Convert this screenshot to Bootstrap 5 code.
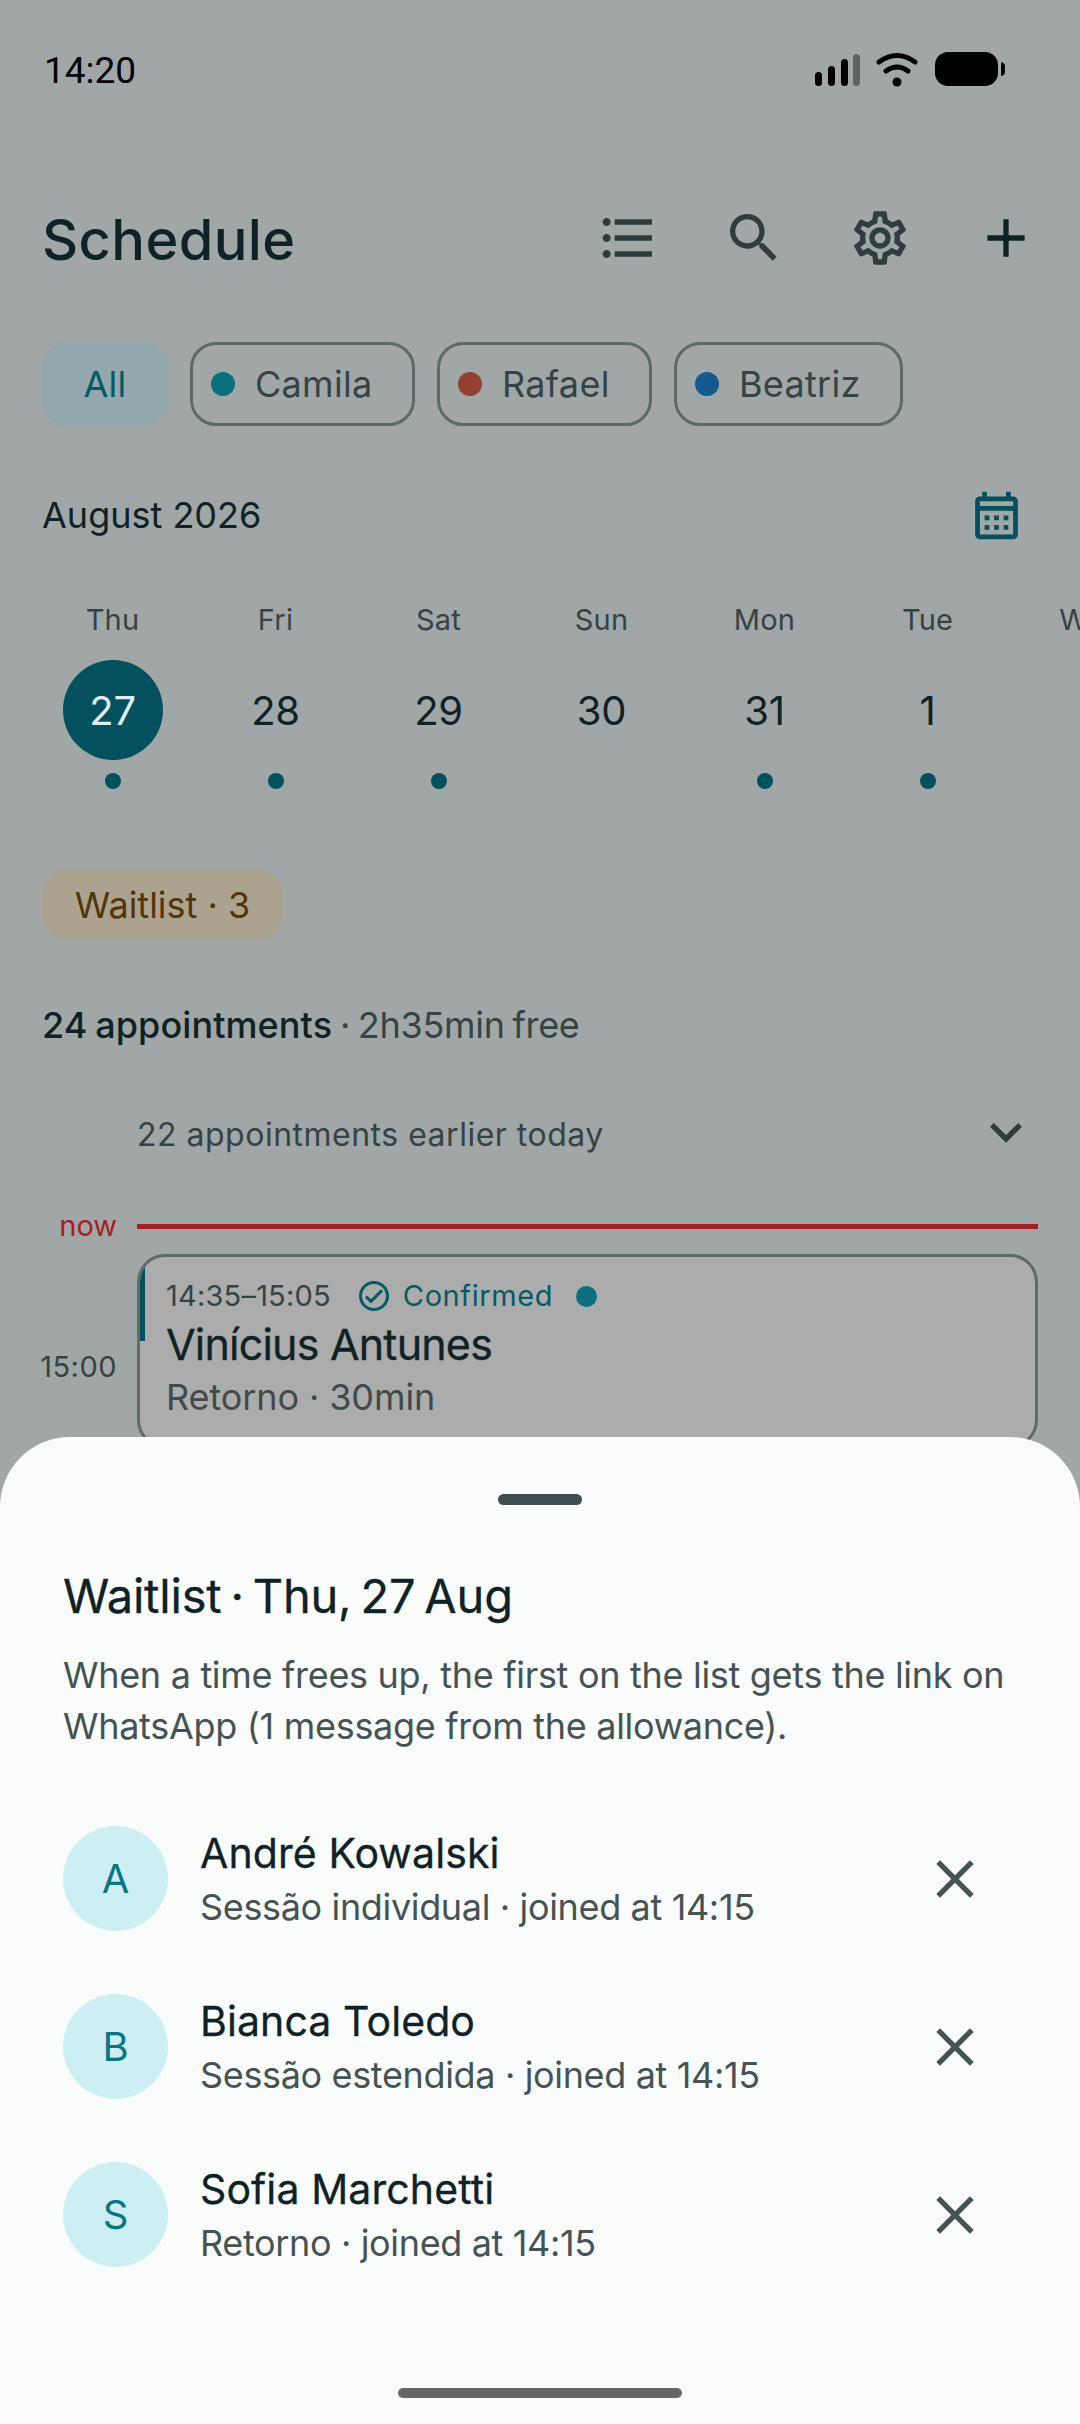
<!DOCTYPE html>
<html lang="en">
<head>
  <meta charset="UTF-8">
  <meta name="viewport" content="width=device-width, initial-scale=1">
  <title>Schedule</title>
  <link href="https://cdn.jsdelivr.net/npm/bootstrap@5.3.0/dist/css/bootstrap.min.css" rel="stylesheet">
  <style>
    html, body { margin: 0; background: #a1a7a7; }
    body { font-family: Inter, "Noto Sans", sans-serif; color: #0f2226; }
    svg { display: block; fill: currentColor; }
    .phone { width: 1080px; height: 2424px; overflow: hidden; background: #a1a7a7; }
    .statusbar { height: 140px; padding: 0 75px 0 44px; font: 400 37px/1 Roboto, sans-serif; color: #000; }
    .appbar { height: 202px; padding: 0 42px; }
    .screen-title { font-size: 56px; font-weight: 500; letter-spacing: .4px; margin: 0 0 3px; line-height: 1; }
    .appbar-icons { gap: 62px; color: #2f3d3f; margin-bottom: 6px; }
    .plus-icon { color: #0f2226; }
    .ic64 { width: 64px; height: 64px; flex: none; }
    .chips { padding: 0 42px; gap: 22px; height: 84px; }
    .chip-item { height: 84px; border-radius: 26px; font-size: 36px; letter-spacing: .3px; color: #354345; border: 3px solid #5c6a6b; padding: 0 0 0 18px; gap: 20px; }
    .chip-on { width: 126px; background: #92a8ad; color: #055a68; border: 0; padding: 0; justify-content: center; }
    .chip-camila { width: 225px; }
    .chip-rafael { width: 215px; }
    .chip-beatriz { width: 229px; }
    .who-dot { width: 24px; height: 24px; border-radius: 50%; flex: none; }
    .month-row { padding: 0 42px; margin-top: 57px; height: 64px; }
    .month-name { font-size: 36px; font-weight: 400; letter-spacing: 0; }
    .cal-icon { width: 57px; height: 57px; color: #03505e; margin-right: 13px; }
    .week { margin-top: 51px; padding-left: 31px; width: 1300px; }
    .day-cell { flex: 0 0 163px; text-align: center; }
    .day-name { font-size: 29px; line-height: 44px; color: #354345; letter-spacing: .2px; }
    .day-num { width: 100px; height: 100px; border-radius: 50%; margin: 18px auto 0; padding-top: 2px; font-size: 40px; letter-spacing: -.3px; }
    .day-today { background: #03505e; color: #dfeef0; }
    .day-mark { width: 16px; height: 16px; border-radius: 50%; margin: 13px auto 0; background: #03505e; }
    .day-blank { background: transparent; }
    .wait-pill { margin: 80px 0 0 42px; height: 71px; width: 241px; border-radius: 26px; background: #aba38f; color: #553508; font-size: 36px; letter-spacing: 0; }
    .summary { margin: 53px 0 0 42px; font-size: 36px; line-height: 64px; letter-spacing: -.3px; word-spacing: -2px; color: #354345; }
    .summary b { font-weight: 500; color: #0f2226; letter-spacing: .1px; }
    .earlier { margin: 46px 42px 0 137px; height: 64px; font-size: 32px; letter-spacing: .5px; color: #354345; }
    .earlier svg { color: #2f3d3f; margin-bottom: 6px; }
    .now-row { margin-top: 49px; height: 20px; padding-right: 42px; }
    .now-label { width: 117px; text-align: right; font-size: 29px; color: #a81e24; line-height: 20px; }
    .now-line { flex: 1; height: 5px; background: #a11f24; margin-left: 20px; }
    .slot { margin-top: 18px; padding-right: 42px; }
    .slot-time { width: 117px; text-align: right; font-size: 29px; color: #354345; padding-top: 91px; letter-spacing: .5px; }
    .appt { position: relative; margin-left: 20px; flex: 1; height: 194px; background: #acacac; border: 3px solid #5e6b6b; border-radius: 28px; padding: 17px 0 0 26px; overflow: hidden; }
    .appt-bar { position: absolute; left: 0; top: 0; width: 5px; height: 84px; background: #055060; }
    .appt-top { font-size: 29px; line-height: 44px; color: #354345; letter-spacing: .2px; }
    .appt-status { color: #055a68; gap: 11px; margin-left: 25px; letter-spacing: .6px; }
    .appt-status svg { width: 36px; height: 36px; }
    .appt-dot { width: 21px; height: 21px; border-radius: 50%; background: #0a7080; margin-left: 23px; }
    .appt-name { font-size: 43px; font-weight: 400; line-height: 60px; letter-spacing: -.8px; margin-top: -4px; -webkit-text-stroke: .3px currentColor; }
    .appt-sub { font-size: 36px; line-height: 46px; color: #3f4a4b; letter-spacing: -.1px; }
    .sheet { position: absolute; left: 0; right: 0; bottom: 0; top: 1437px; background: #fafcfc; border-radius: 70px 70px 0 0; padding: 0 63px; }
    .grabber { width: 84px; height: 11px; border-radius: 6px; background: #3f4f50; margin: 57px auto 0; }
    .sheet-title { font-size: 47px; font-weight: 400; letter-spacing: -.2px; word-spacing: -4px; line-height: 64px; margin: 59px 0 0; color: #0f2226; -webkit-text-stroke: .3px currentColor; }
    .sheet-note { font-size: 36px; line-height: 51px; color: #465354; margin: 22px 0 0; letter-spacing: -.3px; }
    .queue { margin-top: 74px; gap: 63px; }
    .queue-row { height: 105px; gap: 32px; }
    .avatar-round { width: 105px; height: 105px; border-radius: 50%; background: #cdeef3; color: #087583; font-size: 40px; flex: none; }
    .queue-text { padding-top: 3px; }
    .queue-name { font-size: 41px; font-weight: 400; line-height: 52px; letter-spacing: .1px; color: #0f2226; -webkit-text-stroke: .3px currentColor; }
    .queue-sub { font-size: 36px; line-height: 52px; color: #465354; letter-spacing: -.35px; margin-top: 2px; }
    .queue-x { color: #465354; margin-right: 30px; }
    .homebar { position: absolute; left: 398px; bottom: 26px; width: 284px; height: 10px; border-radius: 5px; background: #666; }
  </style>
</head>
<body>
<div class="phone position-relative">
  <!-- status bar -->
  <div class="statusbar d-flex align-items-center justify-content-between">
    <span>14:20</span>
    <svg width="190" height="36" viewBox="0 0 190 36">
      <rect x="0" y="20" width="7" height="14" rx="3.5"/>
      <rect x="13" y="14" width="7" height="20" rx="3.5"/>
      <rect x="26" y="7" width="7" height="27" rx="3.5"/>
      <rect x="38" y="2" width="7" height="32" rx="3.5" fill="#5d6363"/>
      <path d="M64 10 Q82 -3 100 10" fill="none" stroke="#000" stroke-width="5" stroke-linecap="round"/>
      <path d="M71 19 Q82 11 93 19" fill="none" stroke="#000" stroke-width="5" stroke-linecap="round"/>
      <circle cx="82" cy="30" r="4.5"/>
      <rect x="120" y="0" width="63" height="34" rx="13"/>
      <path d="M186 10 q4 1 4 4 v6 q0 3 -4 4z"/>
    </svg>
  </div>

  <!-- app bar -->
  <div class="appbar d-flex align-items-center justify-content-between">
    <h1 class="screen-title">Schedule</h1>
    <div class="appbar-icons d-flex">
      <svg class="ic64" viewBox="0 0 24 24"><path d="M4 10.5c-.83 0-1.5.67-1.5 1.5s.67 1.5 1.5 1.5 1.5-.67 1.5-1.5-.67-1.5-1.5-1.5zm0-6c-.83 0-1.5.67-1.5 1.5S3.17 7.5 4 7.5 5.5 6.83 5.5 6 4.83 4.5 4 4.5zm0 12c-.83 0-1.5.68-1.5 1.5s.68 1.5 1.5 1.5 1.5-.68 1.5-1.5-.67-1.5-1.5-1.5zM7 19h14v-2H7v2zm0-6h14v-2H7v2zm0-8v2h14V5H7z"/></svg>
      <svg class="ic64" viewBox="0 0 24 24"><path d="M15.5 14h-.79l-.28-.27A6.471 6.471 0 0 0 16 9.5 6.5 6.5 0 1 0 9.5 16c1.61 0 3.09-.59 4.23-1.57l.27.28v.79l5 4.99L20.49 19l-4.99-5zm-6 0C7.01 14 5 11.99 5 9.5S7.01 5 9.5 5 14 7.01 14 9.5 11.99 14 9.5 14z"/></svg>
      <svg class="ic64" viewBox="0 0 24 24"><path d="M19.43 12.98c.04-.32.07-.64.07-.98 0-.34-.03-.66-.07-.98l2.11-1.65c.19-.15.24-.42.12-.64l-2-3.46c-.09-.16-.26-.25-.44-.25-.06 0-.12.01-.17.03l-2.49 1c-.52-.4-1.08-.73-1.69-.98l-.38-2.65C14.46 2.18 14.25 2 14 2h-4c-.25 0-.46.18-.49.42l-.38 2.65c-.61.25-1.17.59-1.69.98l-2.49-1c-.06-.02-.12-.03-.18-.03-.17 0-.34.09-.43.25l-2 3.46c-.13.22-.07.49.12.64l2.11 1.65c-.04.32-.07.65-.07.98 0 .33.03.66.07.98l-2.11 1.65c-.19.15-.24.42-.12.64l2 3.46c.09.16.26.25.44.25.06 0 .12-.01.17-.03l2.49-1c.52.4 1.08.73 1.69.98l.38 2.65c.03.24.24.42.49.42h4c.25 0 .46-.18.49-.42l.38-2.65c.61-.25 1.17-.59 1.69-.98l2.49 1c.06.02.12.03.18.03.17 0 .34-.09.43-.25l2-3.46c.12-.22.07-.49-.12-.64l-2.11-1.65zm-1.98-1.71c.04.31.05.52.05.73 0 .21-.02.43-.05.73l-.14 1.13.89.7 1.08.84-.7 1.21-1.27-.51-1.04-.42-.9.68c-.43.32-.84.56-1.25.73l-1.06.43-.16 1.13-.2 1.35h-1.4l-.19-1.35-.16-1.13-1.06-.43c-.43-.18-.83-.41-1.23-.71l-.91-.7-1.06.43-1.27.51-.7-1.21 1.08-.84.89-.7-.14-1.13c-.03-.31-.05-.54-.05-.74s.02-.43.05-.73l.14-1.13-.89-.7-1.08-.84.7-1.21 1.27.51 1.04.42.9-.68c.43-.32.84-.56 1.25-.73l1.06-.43.16-1.13.2-1.35h1.39l.19 1.35.16 1.13 1.06.43c.43.18.83.41 1.23.71l.91.7 1.06-.43 1.27-.51.7 1.21-1.07.85-.89.7.14 1.13zM12 8c-2.21 0-4 1.79-4 4s1.79 4 4 4 4-1.79 4-4-1.79-4-4-4zm0 6c-1.1 0-2-.9-2-2s.9-2 2-2 2 .9 2 2-.9 2-2 2z"/></svg>
      <svg class="ic64 plus-icon" viewBox="0 0 24 24"><path d="M19 13h-6v6h-2v-6H5v-2h6V5h2v6h6v2z"/></svg>
    </div>
  </div>

  <!-- professional filter -->
  <div class="chips d-flex">
    <div class="chip-item chip-on d-flex align-items-center">All</div>
    <div class="chip-item chip-camila d-flex align-items-center"><span class="who-dot" style="background:#0a7080"></span>Camila</div>
    <div class="chip-item chip-rafael d-flex align-items-center"><span class="who-dot" style="background:#964030"></span>Rafael</div>
    <div class="chip-item chip-beatriz d-flex align-items-center"><span class="who-dot" style="background:#145a90"></span>Beatriz</div>
  </div>

  <div class="month-row d-flex align-items-center justify-content-between">
    <span class="month-name">August 2026</span>
    <svg class="cal-icon" viewBox="0 0 24 24"><path d="M19 4h-1V2h-2v2H8V2H6v2H5c-1.11 0-1.99.9-1.99 2L3 20c0 1.1.89 2 2 2h14c1.1 0 2-.9 2-2V6c0-1.1-.9-2-2-2zm0 16H5V10h14v10zm0-12H5V6h14v2zM7 12h2v2H7v-2zm4 0h2v2h-2v-2zm4 0h2v2h-2v-2zm-8 4h2v2H7v-2zm4 0h2v2h-2v-2zm4 0h2v2h-2v-2z"/></svg>
  </div>

  <!-- week strip -->
  <div class="week d-flex">
    <div class="day-cell"><div class="day-name">Thu</div><div class="day-num day-today d-flex align-items-center justify-content-center">27</div><div class="day-mark"></div></div>
    <div class="day-cell"><div class="day-name">Fri</div><div class="day-num d-flex align-items-center justify-content-center">28</div><div class="day-mark"></div></div>
    <div class="day-cell"><div class="day-name">Sat</div><div class="day-num d-flex align-items-center justify-content-center">29</div><div class="day-mark"></div></div>
    <div class="day-cell"><div class="day-name">Sun</div><div class="day-num d-flex align-items-center justify-content-center">30</div><div class="day-mark day-blank"></div></div>
    <div class="day-cell"><div class="day-name">Mon</div><div class="day-num d-flex align-items-center justify-content-center">31</div><div class="day-mark"></div></div>
    <div class="day-cell"><div class="day-name">Tue</div><div class="day-num d-flex align-items-center justify-content-center">1</div><div class="day-mark"></div></div>
    <div class="day-cell"><div class="day-name">Wed</div></div>
  </div>

  <div class="wait-pill d-flex align-items-center justify-content-center">Waitlist · 3</div>
  <div class="summary"><b>24 appointments</b> · 2h35min free</div>

  <div class="earlier d-flex align-items-center justify-content-between">
    <span>22 appointments earlier today</span>
    <svg class="ic64" viewBox="0 0 24 24"><path d="M16.59 8.59 12 13.17 7.41 8.59 6 10l6 6 6-6z"/></svg>
  </div>

  <div class="now-row d-flex align-items-center">
    <div class="now-label">now</div>
    <div class="now-line"></div>
  </div>

  <div class="slot d-flex">
    <div class="slot-time">15:00</div>
    <div class="appt">
      <div class="appt-bar"></div>
      <div class="appt-top d-flex align-items-center">
        <span>14:35–15:05</span>
        <span class="appt-status d-flex align-items-center">
          <svg viewBox="0 0 24 24"><path d="M12 2C6.48 2 2 6.48 2 12s4.48 10 10 10 10-4.48 10-10S17.52 2 12 2zm0 18c-4.42 0-8-3.58-8-8s3.58-8 8-8 8 3.58 8 8-3.58 8-8 8zm4.59-12.42L10 14.17l-2.59-2.58L6 13l4 4 8-8z"/></svg>
          Confirmed
        </span>
        <span class="appt-dot"></span>
      </div>
      <div class="appt-name">Vinícius Antunes</div>
      <div class="appt-sub">Retorno · 30min</div>
    </div>
  </div>

  <!-- waitlist bottom sheet -->
  <div class="sheet">
    <div class="grabber"></div>
    <h2 class="sheet-title">Waitlist · Thu, 27 Aug</h2>
    <p class="sheet-note">When a time frees up, the first on the list gets the link on<br>WhatsApp (1 message from the allowance).</p>
    <div class="queue d-flex flex-column">
      <div class="queue-row d-flex align-items-center">
        <div class="avatar-round d-flex align-items-center justify-content-center">A</div>
        <div class="queue-text flex-grow-1"><div class="queue-name">André Kowalski</div><div class="queue-sub">Sessão individual · joined at 14:15</div></div>
        <svg class="ic64 queue-x" viewBox="0 0 24 24"><path d="M19 6.41 17.59 5 12 10.59 6.41 5 5 6.41 10.59 12 5 17.59 6.41 19 12 13.41 17.59 19 19 17.59 13.41 12z"/></svg>
      </div>
      <div class="queue-row d-flex align-items-center">
        <div class="avatar-round d-flex align-items-center justify-content-center">B</div>
        <div class="queue-text flex-grow-1"><div class="queue-name">Bianca Toledo</div><div class="queue-sub">Sessão estendida · joined at 14:15</div></div>
        <svg class="ic64 queue-x" viewBox="0 0 24 24"><path d="M19 6.41 17.59 5 12 10.59 6.41 5 5 6.41 10.59 12 5 17.59 6.41 19 12 13.41 17.59 19 19 17.59 13.41 12z"/></svg>
      </div>
      <div class="queue-row d-flex align-items-center">
        <div class="avatar-round d-flex align-items-center justify-content-center">S</div>
        <div class="queue-text flex-grow-1"><div class="queue-name">Sofia Marchetti</div><div class="queue-sub">Retorno · joined at 14:15</div></div>
        <svg class="ic64 queue-x" viewBox="0 0 24 24"><path d="M19 6.41 17.59 5 12 10.59 6.41 5 5 6.41 10.59 12 5 17.59 6.41 19 12 13.41 17.59 19 19 17.59 13.41 12z"/></svg>
      </div>
    </div>
    <div class="homebar"></div>
  </div>
</div>
<script src="https://cdn.jsdelivr.net/npm/bootstrap@5.3.0/dist/js/bootstrap.bundle.min.js"></script>
</body>
</html>
